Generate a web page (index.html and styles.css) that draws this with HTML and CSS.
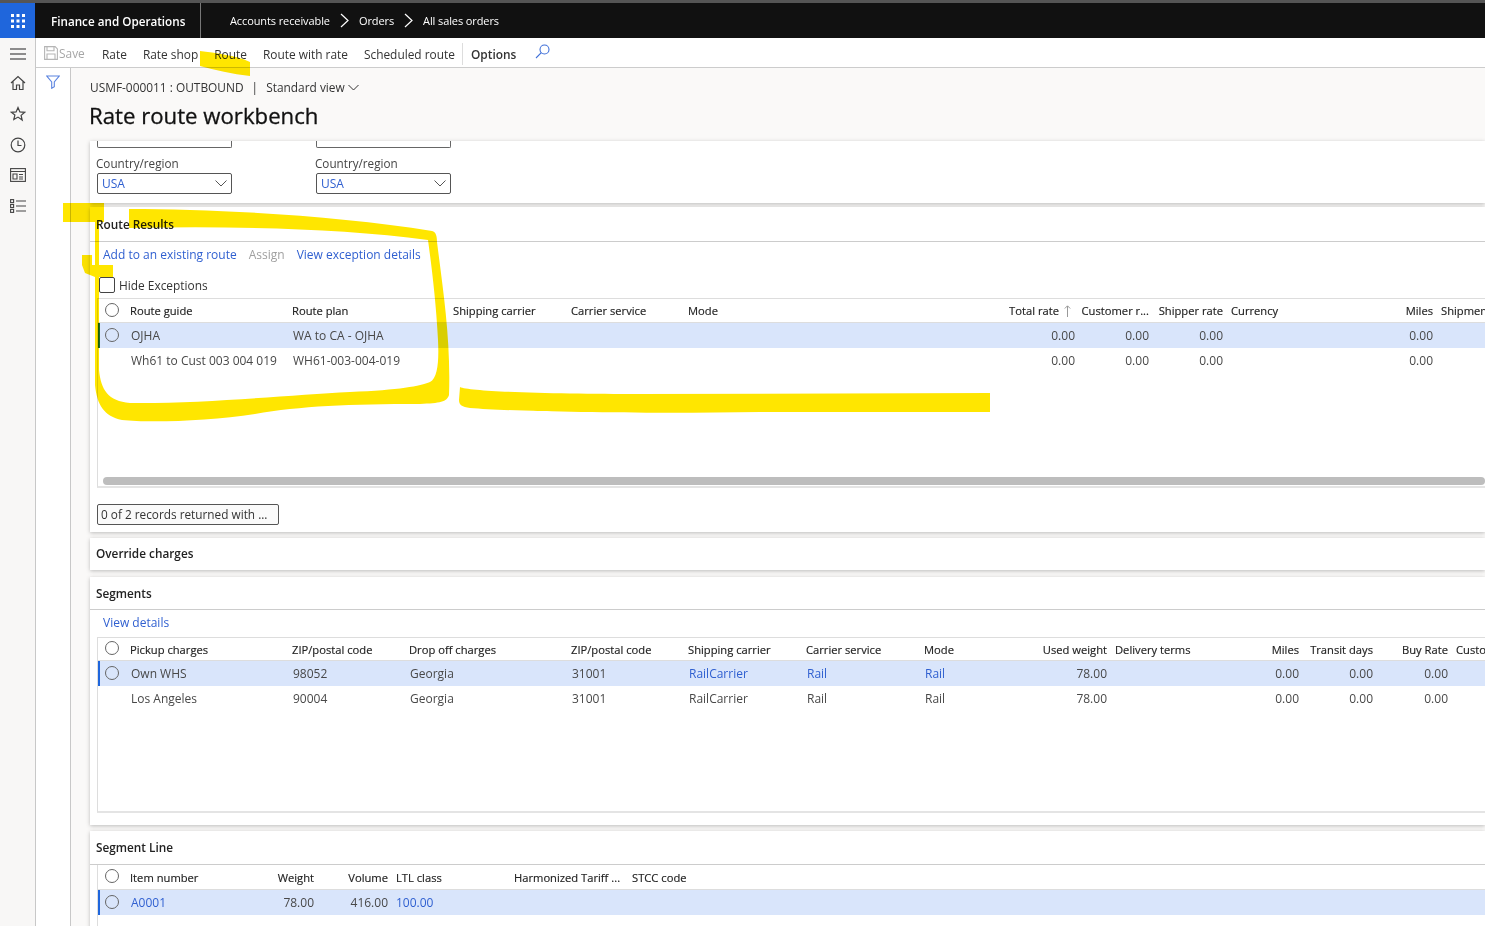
FILE: index.html
```html
<!DOCTYPE html>
<html lang="en">
<head>
<meta charset="utf-8">
<title>Rate route workbench</title>
<link rel="stylesheet" href="styles.css">
</head>
<body>
<header class="topbar">
  <div class="waffle">
    <svg width="14" height="14" viewBox="0 0 14 14" fill="#fff"><rect x="0" y="0" width="3" height="3"/><rect x="5.5" y="0" width="3" height="3"/><rect x="11" y="0" width="3" height="3"/><rect x="0" y="5.5" width="3" height="3"/><rect x="5.5" y="5.5" width="3" height="3"/><rect x="11" y="5.5" width="3" height="3"/><rect x="0" y="11" width="3" height="3"/><rect x="5.5" y="11" width="3" height="3"/><rect x="11" y="11" width="3" height="3"/></svg>
  </div>
  <div class="brand">Finance and Operations</div>
  <nav class="crumbs">
    <span>Accounts receivable</span>
    <svg class="crumb-sep" width="9" height="15" viewBox="0 0 9 15"><path d="M1 1l7 6.500L1 14" fill="none" stroke="#fff" stroke-width="1.2"/></svg>
    <span>Orders</span>
    <svg class="crumb-sep" width="9" height="15" viewBox="0 0 9 15"><path d="M1 1l7 6.500L1 14" fill="none" stroke="#fff" stroke-width="1.2"/></svg>
    <span>All sales orders</span>
  </nav>
</header>
<div class="shell">
  <aside class="rail">
    <svg class="rail-icon first" width="16" height="12" viewBox="0 0 16 12"><path d="M0 1h16M0 6h16M0 11h16" stroke="#222" stroke-width="1.2"/></svg>
    <svg class="rail-icon" width="16" height="16" viewBox="0 0 16 16" fill="none" stroke="#444" stroke-width="1.2"><path d="M1 8l7-6.500L15 8M3 6.500V14.500h3.500V10h3v4.500H13V6.500"/></svg>
    <svg class="rail-icon" width="16" height="16" viewBox="0 0 16 16" fill="none" stroke="#444" stroke-width="1.2"><path d="M8 1.500l1.900 4.400 4.800.4-3.600 3.100 1.100 4.700L8 11.100l-4.200 2.500 1.100-4.700L1.300 6.300l4.800-.4z"/></svg>
    <svg class="rail-icon" width="16" height="16" viewBox="0 0 16 16" fill="none" stroke="#444" stroke-width="1.2"><circle cx="8" cy="8" r="6.800"/><path d="M8 3.500V8.500h3.500"/></svg>
    <svg class="rail-icon" width="16" height="14" viewBox="0 0 16 14" fill="none" stroke="#444" stroke-width="1.1"><rect x=".6" y=".6" width="14.800" height="12.800"/><path d="M.6 3.500h14.800M3 6h4v5H3zM9 6.500h4M9 9h4M9 11h4"/></svg>
    <svg class="rail-icon last" width="16" height="14" viewBox="0 0 16 14" fill="none" stroke="#444" stroke-width="1.1"><rect x=".6" y=".6" width="3" height="3"/><rect x=".6" y="5.500" width="3" height="3"/><rect x=".6" y="10.400" width="3" height="3"/><path d="M6 2h10M6 7h10M6 12h10"/></svg>
  </aside>
  <div class="workspace">
    <div class="actionbar">
      <span class="action disabled save">
        <svg width="14" height="14" viewBox="0 0 14 14" fill="none" stroke="#b5b5b5" stroke-width="1.1"><path d="M.6.6h10.500l2.300 2.300v10.500H.6z"/><path d="M3 .6v4.200h7V.6M3 13.400V8h8v5.400"/></svg>
        Save
      </span>
      <span class="action">Rate</span>
      <span class="action">Rate shop</span>
      <span class="action">Route</span>
      <span class="action">Route with rate</span>
      <span class="action">Scheduled route</span>
      <span class="action-divider"></span>
      <span class="action strong">Options</span>
      <svg class="search" width="15" height="15" viewBox="0 0 15 15" fill="none" stroke="#3f6fd8" stroke-width="1.1"><circle cx="9.500" cy="5.500" r="4.500"/><path d="M6.300 8.700L1 14"/></svg>
    </div>
    <div class="body-row">
      <div class="filterpane">
        <svg width="14" height="14" viewBox="0 0 14 14" fill="none" stroke="#5b84e0" stroke-width="1.1"><path d="M.8 1h12.400L8.300 7v4.800l-2.600 1.500V7z"/></svg>
      </div>
      <main class="page">
        <div class="pagehead">
          <div class="context">
            <span>USMF-000011 : OUTBOUND</span><span class="pipe">|</span><span>Standard view</span>
            <svg width="11" height="7" viewBox="0 0 11 7"><path d="M.5 1l5 5 5-5" fill="none" stroke="#333" stroke-width="1"/></svg>
          </div>
          <h1>Rate route workbench</h1>
        </div>

        <section class="card addr">
          <div class="addr-col">
            <div class="stub"></div>
            <label class="fieldlabel">Country/region</label>
            <div class="select"><span>USA</span><svg width="12" height="7" viewBox="0 0 12 7"><path d="M.5.500l5.500 5.500 5.500-5.500" fill="none" stroke="#555" stroke-width="1"/></svg></div>
          </div>
          <div class="addr-col">
            <div class="stub"></div>
            <label class="fieldlabel">Country/region</label>
            <div class="select"><span>USA</span><svg width="12" height="7" viewBox="0 0 12 7"><path d="M.5.500l5.500 5.500 5.500-5.500" fill="none" stroke="#555" stroke-width="1"/></svg></div>
          </div>
        </section>

        <section class="card results">
          <h2 class="cardtitle">Route Results</h2>
          <div class="links">
            <a>Add to an existing route</a><span class="muted">Assign</span><a>View exception details</a>
          </div>
          <label class="check"><span class="box"></span>Hide Exceptions</label>
          <div class="grid route-grid">
            <div class="row head">
              <span class="radio"></span><span>Route guide</span><span>Route plan</span><span>Shipping carrier</span><span>Carrier service</span><span>Mode</span>
              <span class="r sorted">Total rate<svg width="7" height="12" viewBox="0 0 7 12"><path d="M3.500 12V1M.8 3.500L3.500.8l2.700 2.700" fill="none" stroke="#999" stroke-width="1"/></svg></span>
              <span class="r">Customer r...</span><span class="r">Shipper rate</span><span class="p">Currency</span><span class="r">Miles</span><span class="p">Shipment</span>
            </div>
            <div class="row sel">
              <span class="radio"></span><span>OJHA</span><span>WA to CA - OJHA</span><span></span><span></span><span></span>
              <span class="r">0.00</span><span class="r">0.00</span><span class="r">0.00</span><span></span><span class="r">0.00</span><span></span>
            </div>
            <div class="row">
              <span></span><span>Wh61 to Cust 003 004 019</span><span>WH61-003-004-019</span><span></span><span></span><span></span>
              <span class="r">0.00</span><span class="r">0.00</span><span class="r">0.00</span><span></span><span class="r">0.00</span><span></span>
            </div>
            <div class="scrollbar"></div>
          </div>
          <div class="records">0 of 2 records returned with ...</div>
        </section>

        <section class="card plain">
          <h2 class="cardtitle">Override charges</h2>
        </section>

        <section class="card segments">
          <h2 class="cardtitle">Segments</h2>
          <div class="links one"><a>View details</a></div>
          <div class="grid seg-grid">
            <div class="row head">
              <span class="radio"></span><span>Pickup charges</span><span>ZIP/postal code</span><span>Drop off charges</span><span>ZIP/postal code</span><span>Shipping carrier</span><span>Carrier service</span><span>Mode</span>
              <span class="r">Used weight</span><span class="p">Delivery terms</span><span class="r">Miles</span><span class="r">Transit days</span><span class="r">Buy Rate</span><span class="p">Customer</span>
            </div>
            <div class="row sel blue">
              <span class="radio"></span><span>Own WHS</span><span>98052</span><span>Georgia</span><span>31001</span><a>RailCarrier</a><a>Rail</a><a>Rail</a>
              <span class="r">78.00</span><span></span><span class="r">0.00</span><span class="r">0.00</span><span class="r">0.00</span><span></span>
            </div>
            <div class="row">
              <span></span><span>Los Angeles</span><span>90004</span><span>Georgia</span><span>31001</span><span>RailCarrier</span><span>Rail</span><span>Rail</span>
              <span class="r">78.00</span><span></span><span class="r">0.00</span><span class="r">0.00</span><span class="r">0.00</span><span></span>
            </div>
          </div>
        </section>

        <section class="card line">
          <h2 class="cardtitle">Segment Line</h2>
          <div class="grid line-grid">
            <div class="row head">
              <span class="radio"></span><span>Item number</span><span class="r">Weight</span><span class="r">Volume</span><span class="p">LTL class</span><span class="p">Harmonized Tariff ...</span><span class="p">STCC code</span>
            </div>
            <div class="row sel blue">
              <span class="radio"></span><a>A0001</a><span class="r">78.00</span><span class="r">416.00</span><a class="p">100.00</a><span></span><span></span>
            </div>
          </div>
        </section>
      </main>
    </div>
  </div>
</div>
<svg class="marker" width="1485" height="926" viewBox="0 0 1485 926">
  <path d="M200 51C215 53 235 55 250 62L250 76C232 74 215 70 200 66Z"/>
  <path d="M63 203H104V222H63Z"/>
  <path d="M129 209C220 209 340 216 432 231C436 232 437 236 437 242C443 290 451 340 449 395C447 402 440 403 420 404C350 404 300 406 255 414C210 421 150 423 122 420C104 416 97 405 95 385L95 222L99 222L99 370C101 390 108 401 130 403C200 404 290 395 350 392C400 390 420 386 430 382C438 378 439 360 438 340C436 300 431 262 428 240C340 228 230 226 129 228Z"/>
  <path d="M82 255H92V265H113V277H95L85 273L82 265Z"/>
  <path d="M460 387C470 392 560 394 640 394L990 393V412H760C650 414 520 412 470 408C462 407 459 405 459 400Z"/>
</svg>
</body>
</html>
```

FILE: styles.css
```css
* { box-sizing: border-box; }
html, body { margin: 0; height: 926px; overflow: hidden; }
body {
  font-family: "Open Sans", "Liberation Sans", sans-serif;
  font-size: 12px;
  color: #333;
  background: #faf9f8;
  display: flex;
  flex-direction: column;
  position: relative;
}
a { color: #2f5fd0; }

.topbar {
  height: 38px;
  flex: none;
  display: flex;
  align-items: stretch;
  background: #111;
  border-top: 3px solid #555;
  color: #fff;
}
.waffle {
  width: 35px;
  background: #1f66dc;
  display: flex;
  align-items: center;
  justify-content: center;
}
.brand {
  width: 166px;
  padding-left: 16px;
  border-right: 1px solid #777;
  font-size: 11.700px;
  font-weight: 600;
  display: flex;
  align-items: center;
}
.crumbs {
  display: flex;
  align-items: center;
  padding-left: 29px;
  gap: 10px;
  font-size: 11px;
  letter-spacing: -.1px;
}

.shell { flex: 1; display: flex; min-height: 0; }
.rail {
  width: 36px;
  flex: none;
  background: #f8f7f6;
  border-right: 1px solid #c8c8c8;
  display: flex;
  flex-direction: column;
  align-items: center;
  padding-top: 10px;
  gap: 15px;
}
.rail-icon { flex: none; }
.rail-icon.last { margin-top: 2px; }

.workspace { flex: 1; min-width: 0; display: flex; flex-direction: column; }
.actionbar {
  height: 30px;
  flex: none;
  background: #fff;
  border-bottom: 1px solid #ccc;
  display: flex;
  align-items: center;
  padding: 2px 0 0 8px;
  gap: 16px;
  font-size: 11.900px;
}
.action { white-space: nowrap; }
.action.save { display: flex; align-items: center; gap: 1px; width: 42px; margin-top: -2px; }
.action.disabled { color: #a6a6a6; }
.action.strong { font-weight: 600; }
.action-divider { width: 1px; height: 22px; background: #ddd; margin: 0 -8px 0 -9px; }
.search { margin: -5px 0 0 3px; }

.body-row { flex: 1; display: flex; min-height: 0; }
.filterpane {
  width: 35px;
  flex: none;
  background: #fff;
  border-right: 1px solid #c8c8c8;
  padding: 7px 0 0 10px;
}
.page { flex: 1; min-width: 0; padding-left: 19px; overflow: hidden; }
.pagehead { height: 73px; padding: 11px 0 0 0; }
.context { display: flex; align-items: center; height: 16px; font-size: 11.900px; }
.context svg { margin-left: 3px; }
.pipe { margin: 0 8px; }
h1 {
  margin: 6px 0 0 -1px;
  font-size: 22.200px;
  line-height: 30px;
  font-weight: 500;
  color: #111;
  -webkit-text-stroke: .3px #111;
}

.card {
  background: #fff;
  box-shadow: 0 1px 4px rgba(0, 0, 0, .25);
  padding-left: 7px;
}
.addr {
  height: 62px;
  display: flex;
  gap: 84px;
  padding-left: 7px;
}
.addr-col { width: 135px; }
.stub {
  height: 7px;
  border: 1px solid #666;
  border-top: 0;
  border-radius: 0 0 2px 2px;
}
.fieldlabel { display: block; margin: 7px 0 0 -1px; height: 18px; line-height: 17px; color: #444; font-size: 11.700px; }
.select {
  height: 21px;
  border: 1px solid #555;
  border-radius: 2px;
  display: flex;
  align-items: center;
  justify-content: space-between;
  padding: 0 4px;
  color: #2f5fd0;
}

.cardtitle {
  margin: 0 0 0 -7px;
  padding-left: 6px;
  height: 35px;
  line-height: 35px;
  font-size: 11.800px;
  font-weight: 600;
  color: #222;
  border-bottom: 1px solid #ccc;
}
.results { height: 325px; margin-top: 4px; }
.links {
  display: flex;
  gap: 15px;
  padding-left: 6px;
  height: 24px;
  align-items: center;
}
.links.one { height: 25px; margin-bottom: 2px; }
.muted { color: #a0a0a0; margin: 0 -3px 0 -3px; }
.check { display: flex; align-items: center; gap: 4px; height: 17px; margin: 10px 0 5px 2px; font-size: 11.900px; }
.box { width: 16px; height: 16px; border: 1px solid #444; border-radius: 2px; }

.grid {
  border-top: 1px solid #ddd;
  border-left: 1px solid #ddd;
  position: relative;
}
.row {
  display: grid;
  height: 25px;
  align-items: center;
  white-space: nowrap;
  color: #484848;
}
.row:not(.head) > :not(.r):not(.radio):not(.p) { padding-left: 1px; }
.row.head { height: 24px; border-bottom: 1px solid #ddd; font-size: 11.200px; color: #222; -webkit-text-stroke: .15px #222; }
.row.sel { background: #d9e5fb; box-shadow: inset 2px 0 0 #1c6b2a; }
.row.sel.blue { box-shadow: inset 2px 0 0 #1f66dc; }
.row > * { min-width: 0; overflow: hidden; }
.row > a { color: #2f5fd0; }
.row > .radio {
  width: 14px;
  height: 14px;
  border: 1.500px solid #666;
  border-radius: 50%;
  margin: -2px 0 0 7px;
}
.r { text-align: right; padding-right: 1px; }
.p { padding-left: 7px; }
.row > .sorted { display: flex; align-items: center; justify-content: flex-end; gap: 5px; padding-right: 5px; }

.route-grid { height: 190px; border-bottom: 2px solid #e4e4e4; }
.route-grid .row { grid-template-columns: 32px 162px 161px 118px 117px 300px 88px 74px 74px 136px 74px 100px; }
.scrollbar {
  position: absolute;
  left: 5px;
  right: 0;
  bottom: 1px;
  height: 8px;
  border-radius: 4px;
  background: #bdbdbd;
}
.records {
  width: 182px;
  height: 21px;
  margin-top: 16px;
  border: 1px solid #555;
  border-radius: 2px;
  padding-left: 3px;
  line-height: 19px;
  font-size: 11.800px;
  background: #fafafa;
}
.plain { height: 32px; margin-top: 6px; }
.plain .cardtitle { border-bottom: 0; height: 32px; line-height: 31px; }
.segments { height: 248px; margin-top: 7px; }
.segments .cardtitle { height: 33px; line-height: 33px; }
.seg-grid { height: 176px; border-bottom: 2px solid #e4e4e4; }
.seg-grid .row { grid-template-columns: 32px 162px 117px 162px 117px 118px 118px 118px 66px 118px 74px 74px 75px 60px; }
.seg-grid .row.head { height: 23px; }
.line { margin-top: 6px; height: 120px; }
.line .cardtitle { height: 34px; line-height: 32px; }
.line-grid { height: 70px; border-top: 0; }
.line-grid .row { grid-template-columns: 32px 111px 74px 74px 118px 118px 200px; }
.line-grid .row.head { height: 25px; }

.marker {
  position: absolute;
  left: 0;
  top: 0;
  pointer-events: none;
  fill: #ffe600;
  mix-blend-mode: multiply;
}
```
